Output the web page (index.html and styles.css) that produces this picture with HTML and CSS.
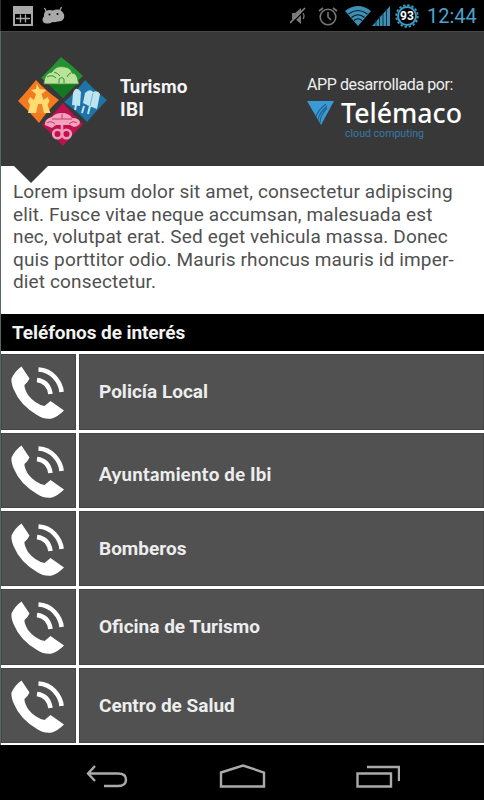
FILE: index.html
```html
<!DOCTYPE html>
<html lang="es">

<head>
    <meta charset="UTF-8">
    <meta name="viewport" content="width=device-width, initial-scale=1.0">
    <title>Turismo IBI</title>
    <link rel="stylesheet" href="styles.css">
</head>

<body>
    <!-- Shared icons -->
    <svg class="sprite" width="0" height="0">
        <symbol id="phone" viewBox="0 0 54 54">
            <path fill="#fff" d="M10.500 .5 L18.500 12.500 Q17 16 13.500 19 Q13 22 17 29 Q24 38 33.500 40 Q36 38 39.500 35 L53 44.500 Q47 50.500 41 52.500 Q34 54 26 49 Q9 39 2.500 23 Q0 17 .5 12.500 Q4 5 10.500 .5 Z" />
            <path fill="none" stroke="#fff" stroke-width="4.6" d="M27.500 3.500 Q37 4 43.500 11 Q50 18 50.500 26 M26 14 Q37.500 15.500 39.500 28" />
        </symbol>
    </svg>

    <div class="status-bar">
        <div class="notifications">
            <svg width="20" height="20" viewBox="0 0 20 20">
                <path fill="#a9a9a9" fill-rule="evenodd" d="M0 0h20v20H0z M2 8v10h16V8z" />
                <path stroke="#a9a9a9" stroke-width="1.300" d="M7.500 8.500v8 M12.500 8.500v8 M3 12.500h14" />
            </svg>
            <svg width="23" height="18" viewBox="0 0 23 18">
                <path fill="#a9a9a9" d="M4 4 Q7 2.500 11 3.500 Q16 1.500 19.500 4 Q23 7 22 11 Q20.500 14.500 16 14.500 Q12 15.500 10.500 15 Q8 17 4 16.500 Q.5 16 .5 12.500 Q.5 10.500 2 9.500 Q1.500 6 4 4z" />
                <path stroke="#a9a9a9" stroke-width="1.300" d="M4.500 5 L2.500 1 M17.500 4 L19.500 0" />
                <circle cx="7.500" cy="7.500" r="1" fill="#000" />
                <circle cx="15.500" cy="7" r="1" fill="#000" />
            </svg>
        </div>
        <div class="indicators">
            <svg width="17" height="20" viewBox="0 0 17 20">
                <path fill="#777" d="M2 7h3l6-5v16l-6-5H2z" />
                <path fill="none" stroke="#777" stroke-width="1.300" d="M13 7q2 3 0 6" />
                <path stroke="#000" stroke-width="1.500" d="M1 18L16 3" />
                <path stroke="#858585" stroke-width="1.600" d="M0 17L15 2" />
            </svg>
            <svg class="alarm" width="20" height="19" viewBox="0 0 20 19">
                <g fill="none" stroke="#777" stroke-width="1.600">
                    <circle cx="10" cy="10" r="7.800" />
                    <path d="M10 5v5l3 3 M1 4l4-3 M15 1l4 3" />
                </g>
            </svg>
            <svg class="wifi" width="26" height="20" viewBox="0 0 26 20">
                <path fill="#3d8fb5" d="M0 5Q13-5 26 5L13 20z" />
                <path fill="none" stroke="#07161d" stroke-width="1.200" d="M3.500 8Q13 1 22.500 8 M6.500 11.500Q13 6 19.500 11.500 M9 14.500Q13 11 17 14.500" />
            </svg>
            <svg width="19" height="20" viewBox="0 0 19 20">
                <path fill="#3d8fb5" d="M0 20L18 0v20z" />
                <path stroke="#12313f" stroke-width="1" d="M4 14v6 M7.500 10v10 M11 7v13 M14.500 3v17" />
            </svg>
            <svg class="battery" width="24" height="24" viewBox="0 0 24 24">
                <circle cx="12" cy="12" r="9" fill="#000" stroke="#3d9cc7" stroke-width="2" />
                <circle cx="12" cy="12" r="10.800" fill="none" stroke="#3d9cc7" stroke-width="1.800" stroke-dasharray="2.400 1.840" />
                <text class="battery-level" x="12" y="16" text-anchor="middle">93</text>
            </svg>
            <span class="clock">12:44</span>
        </div>
    </div>

    <div class="app">
        <div class="header">
            <svg class="logo" width="90" height="91" viewBox="0 0 90 91">
                <!-- green: mountain -->
                <path fill="#219331" d="M43 1 Q55 10 65 20 Q56 28 45 42 Q34 30 23 22 Q33 12 43 1z" />
                <path fill="#147822" d="M28 26h33L45 42z" />
                <path fill="#b9e398" stroke="#398b37" stroke-width=".8" d="M26 26 Q27 17 34 16 Q38 9 47 11 Q53 12 54 17 Q59 17 60 25 L61 28H26z" />
                <path fill="none" stroke="#398b37" stroke-width="1" d="M29 21q5-3 9 1 M36 16q4 1 6 4 M53 17q-3 1-4 4 M41 27v-4q3-3 5 0v4" />
                <!-- orange: kings -->
                <path fill="#f5791f" d="M18 24 Q27 34 41 44 Q30 54 21 67 Q11 55 0 45 Q10 34 18 24z" />
                <path fill="#ffdc72" d="M19 28l2.500 5 7 1-5 4 2 6 4-3 2 4-2 4 3 8H10l2-8-2-4 2-4 4 3 2-6-5-4 5-1z" />
                <path fill="#f0842b" d="M18 57l2-9h4l2 9z" />
                <!-- blue: ice creams -->
                <path fill="#1f73a9" d="M67 24 Q77 35 89 44 Q79 54 69 66 Q58 54 46 46 Q58 36 67 24z" />
                <path fill="#bce5ef" d="M54 49l1-12q3-8 8-1l-1 14z M65 47l2-10q5-5 8-1 5-2 7 2l-3 15-8-3z" />
                <path stroke="#bce5ef" stroke-width="2" d="M58 49l-1 5 M66 50l-2 7 M72 50l-2 8" />
                <path stroke="#73b5d0" stroke-width="1" d="M75 37l-3 13" />
                <!-- magenta: toy car -->
                <path fill="#bd1150" d="M45 47 Q55 59 65 68 Q54 79 45 90 Q35 78 24 69 Q35 59 45 47z" />
                <path fill="#f5a2bd" d="M27 69q-1-6 7-8 3-4 10-4 7 0 10 5 8 0 8 5-1 3-6 4l-4-2H38l-4 3z" />
                <g fill="none">
                    <path stroke="#c23a6d" stroke-width="1" d="M34 63h20 M44 58v5 M29 67q4-3 8 1 M51 68q4-4 8-1" />
                    <path stroke="#f59bba" stroke-width="2.600" d="M44 69v7" />
                    <circle cx="39.500" cy="78" r="4.300" stroke="#f59bba" stroke-width="2.600" />
                    <circle cx="48.500" cy="78" r="4.300" stroke="#f59bba" stroke-width="2.600" />
                </g>
            </svg>
            <h1 class="app-name">Turismo<br>IBI</h1>
            <div class="developer">
                <div class="developer-label">APP desarrollada por:</div>
                <svg class="developer-logo" width="158" height="42" viewBox="0 0 158 42">
                    <path fill="#3b9ad5" d="M0 3h27L14 27z" />
                    <path fill="none" stroke="#20608e" stroke-width="1.100" d="M9 19Q10 13 19 6 M11 22Q12 15 20 8 M13 25Q13 17 20 10" />
                    <text class="brand" x="34" y="25" textLength="121" lengthAdjust="spacingAndGlyphs">Telémaco</text>
                    <text class="tagline" x="38" y="39" textLength="79" lengthAdjust="spacingAndGlyphs">cloud computing</text>
                </svg>
            </div>
        </div>

        <div class="intro">
            <p>Lorem ipsum dolor sit amet, consectetur adipiscing<br>
            elit. Fusce vitae neque accumsan, malesuada est<br>
            nec, volutpat erat. Sed eget vehicula massa. Donec<br>
            quis porttitor odio. Mauris rhoncus mauris id imper-<br>
            diet consectetur.</p>
        </div>

        <h2 class="section-title">Teléfonos de interés</h2>

        <div class="phone-list">
            <div class="phone-row">
                <div class="phone-icon"><svg width="54" height="54"><use href="#phone" /></svg></div>
                <div class="phone-name">Policía Local</div>
            </div>
            <div class="phone-row">
                <div class="phone-icon"><svg width="54" height="54"><use href="#phone" /></svg></div>
                <div class="phone-name town-hall">Ayuntamiento de Ibi</div>
            </div>
            <div class="phone-row">
                <div class="phone-icon"><svg width="54" height="54"><use href="#phone" /></svg></div>
                <div class="phone-name">Bomberos</div>
            </div>
            <div class="phone-row">
                <div class="phone-icon"><svg width="54" height="54"><use href="#phone" /></svg></div>
                <div class="phone-name">Oficina de Turismo</div>
            </div>
            <div class="phone-row">
                <div class="phone-icon"><svg width="54" height="54"><use href="#phone" /></svg></div>
                <div class="phone-name">Centro de Salud</div>
            </div>
        </div>
    </div>

    <div class="nav-bar">
        <svg width="44" height="26" viewBox="0 0 44 26">
            <path d="M10 2L3 9.500L10 17 M3 9.500H33Q41 9.500 41 15.500Q41 22 33 22H19" />
        </svg>
        <svg width="48" height="26" viewBox="0 0 48 26">
            <path d="M2 22.500V8.500L24 1.500L45 8.500V22.500z" />
        </svg>
        <svg width="44" height="26" viewBox="0 0 44 26">
            <path d="M1.500 9.500H35V22.500H1.500z M11 3H43V17" />
        </svg>
    </div>
</body>

</html>
```
FILE: styles.css
```css
* {
    margin: 0;
    padding: 0;
    box-sizing: border-box;
}

body {
    width: 484px;
    height: 800px;
    overflow: hidden;
    background-color: #000;
    font-family: Roboto, Arial, sans-serif;
}

svg {
    display: block;
    flex-shrink: 0;
}

.sprite {
    position: absolute;
}

.status-bar {
    display: flex;
    justify-content: space-between;
    height: 31px;
    padding: 0 7px 0 12px;
    border-left: 1px solid #333;
}

.notifications, .indicators {
    display: flex;
    align-items: center;
}

.notifications {
    gap: 9px;
}

.indicators {
    padding-top: 1px;
}

.alarm {
    margin-left: 11px;
}

.wifi {
    margin: 0 1px 0 7px;
}

.battery {
    margin-left: 4px;
}

.battery-level {
    fill: #fff;
    font-size: 12px;
    font-weight: bold;
}

.clock {
    width: 50px;
    margin-left: 8px;
    color: #4ba3cd;
    font-size: 20px;
    font-weight: 400;
}

.app {
    border-left: 1px solid #596464;
}

.header {
    display: flex;
    height: 135px;
    padding: 24px 19px 0 17px;
    background-color: #383838;
    border-top: 1px solid #4b4747;
}

.app-name {
    margin: 19px 0 0 12px;
    color: #f4f4f4;
    font-family: Lato, "Open Sans", sans-serif;
    font-size: 18.500px;
    font-weight: 900;
    letter-spacing: .2px;
    line-height: 23px;
}

.developer {
    margin: 18px 0 0 auto;
}

.developer-label {
    color: #eee;
    font-size: 16px;
    letter-spacing: -.4px;
    line-height: 22px;
    white-space: nowrap;
}

.developer-logo {
    margin-top: 2px;
    overflow: visible;
}

.brand {
    fill: #fff;
    font-family: "Noto Sans", "Open Sans", sans-serif;
    font-size: 27.500px;
    font-weight: 500;
}

.tagline {
    fill: #347ba9;
    font-size: 11px;
}

.intro {
    position: relative;
    height: 148px;
    padding: 15px 0 0 12px;
    background-color: #fff;
    color: #505050;
    font-size: 19px;
    line-height: 22.600px;
    letter-spacing: .14px;
    white-space: nowrap;
}

/* notch under the header */
.intro::before {
    content: "";
    position: absolute;
    top: 0;
    left: 13px;
    border: solid transparent;
    border-width: 17px 17px 0;
    border-top-color: #383838;
}

.section-title {
    height: 37px;
    padding-left: 11px;
    background-color: #000;
    color: #f2f2f2;
    font-size: 19px;
    letter-spacing: -.08px;
    line-height: 37px;
}

.phone-list {
    display: grid;
    grid-template-rows: 76px 75px 75px 76px 75px;
    row-gap: 3px;
    height: 394px;
    padding: 3px 0 2px;
    background-color: #fff;
}

.phone-row {
    display: flex;
    gap: 3px;
}

.phone-icon {
    width: 75px;
    padding: 12px 0 0 10px;
    background-color: #515151;
    box-shadow: inset 0 0 0 1px #454545;
}

.phone-name {
    flex: 1;
    padding-left: 20px;
    background-color: #515151;
    box-shadow: inset 0 0 0 1px #454545;
    color: #ededed;
    font-size: 19px;
    font-weight: bold;
    line-height: 75px;
}

.town-hall {
    padding-top: 4px;
    font-family: Lato, "Open Sans", sans-serif;
    font-size: 18.500px;
    font-weight: 900;
    letter-spacing: .26px;
    line-height: 74px;
}

.nav-bar {
    display: flex;
    justify-content: space-between;
    height: 55px;
    padding: 19px 84px 0 85px;
}

.nav-bar path {
    fill: none;
    stroke: #aaa;
    stroke-width: 2.400;
}
```
